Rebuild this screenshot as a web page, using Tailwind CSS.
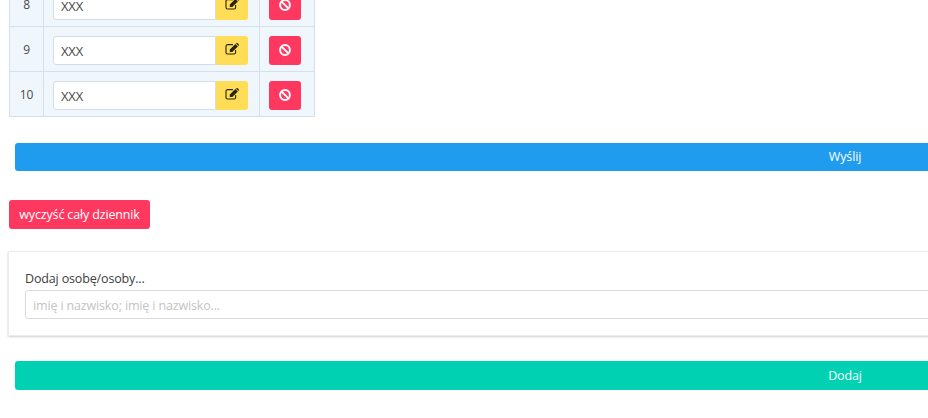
<!DOCTYPE html>
<html lang="pl">
<head>
    <meta charset="UTF-8">
    <meta name="viewport" content="width=device-width, initial-scale=1.0">
    <script src="https://cdn.jsdelivr.net/npm/@tailwindcss/browser@4"></script>
    <title>Dziennik</title>
</head>
<body class="bg-white overflow-hidden h-[418px] font-['Open_Sans',sans-serif] text-[12.5px] tracking-[-0.15px] text-[#4a4a4a]">
    <div class="w-[1700px] -mt-[19px] pl-[9px]">
        <table class="border-collapse bg-[#eff7fd] w-[305px] table-fixed">
            <colgroup><col class="w-[34px]"><col class="w-[216px]"><col class="w-[55px]"></colgroup>
            <tbody>
                <tr class="h-[45px]">
                    <td class="border border-[#d5e1ea] text-center align-middle pt-[2px] text-xs">8</td>
                    <td class="border border-[#d5e1ea] px-[9px] pt-[2px] align-middle">
                        <div class="flex">
                            <input value="XXX" class="w-[163px] h-[29px] bg-white border border-[#d3dde8] rounded-l-[3px] px-[7px] pt-[2px] text-[13px] text-[#4a4a4a]">
                            <button class="w-[32px] h-[29px] bg-[#ffdd57] rounded-r-[3px] flex items-center justify-center pb-[2px]">
                                <svg class="w-[14px] h-[12px]" viewBox="0 0 14 12"><path d="M8 1.6H2.5A1.5 1.5 0 0 0 1 3.1v6.4A1.5 1.5 0 0 0 2.5 11h6.6a1.5 1.5 0 0 0 1.5-1.5V7" fill="none" stroke="#2a2410" stroke-width="1.1"/><path d="M4.8 6.6 10.4 1 12.9 3.4 7.3 9H4.8zM11 .4l.5-.4h1l1.4 1.4v1l-.4.5z" fill="#2a2410"/></svg>
                            </button>
                        </div>
                    </td>
                    <td class="border border-[#d5e1ea] pl-[9px] pt-[2px] align-middle">
                        <button class="w-[32px] h-[29px] bg-[#ff3860] rounded-[3px] flex items-center justify-center pb-[1px]">
                            <svg class="w-[12px] h-[12px]" viewBox="0 0 12 12"><circle cx="6" cy="6" r="4.9" fill="none" stroke="#fff" stroke-width="2"/><path d="M2.6 2.6l6.8 6.8" stroke="#fff" stroke-width="2"/></svg>
                        </button>
                    </td>
                </tr>
                <tr class="h-[45px]">
                    <td class="border border-[#d5e1ea] text-center align-middle pt-[2px] text-xs">9</td>
                    <td class="border border-[#d5e1ea] px-[9px] pt-[2px] align-middle">
                        <div class="flex">
                            <input value="XXX" class="w-[163px] h-[29px] bg-white border border-[#d3dde8] rounded-l-[3px] px-[7px] pt-[2px] text-[13px] text-[#4a4a4a]">
                            <button class="w-[32px] h-[29px] bg-[#ffdd57] rounded-r-[3px] flex items-center justify-center pb-[2px]">
                                <svg class="w-[14px] h-[12px]" viewBox="0 0 14 12"><path d="M8 1.6H2.5A1.5 1.5 0 0 0 1 3.1v6.4A1.5 1.5 0 0 0 2.5 11h6.6a1.5 1.5 0 0 0 1.5-1.5V7" fill="none" stroke="#2a2410" stroke-width="1.1"/><path d="M4.8 6.6 10.4 1 12.9 3.4 7.3 9H4.8zM11 .4l.5-.4h1l1.4 1.4v1l-.4.5z" fill="#2a2410"/></svg>
                            </button>
                        </div>
                    </td>
                    <td class="border border-[#d5e1ea] pl-[9px] pt-[2px] align-middle">
                        <button class="w-[32px] h-[29px] bg-[#ff3860] rounded-[3px] flex items-center justify-center pb-[1px]">
                            <svg class="w-[12px] h-[12px]" viewBox="0 0 12 12"><circle cx="6" cy="6" r="4.9" fill="none" stroke="#fff" stroke-width="2"/><path d="M2.6 2.6l6.8 6.8" stroke="#fff" stroke-width="2"/></svg>
                        </button>
                    </td>
                </tr>
                <tr class="h-[45px]">
                    <td class="border border-[#d5e1ea] text-center align-middle pt-[2px] text-xs">10</td>
                    <td class="border border-[#d5e1ea] px-[9px] pt-[2px] align-middle">
                        <div class="flex">
                            <input value="XXX" class="w-[163px] h-[29px] bg-white border border-[#d3dde8] rounded-l-[3px] px-[7px] pt-[2px] text-[13px] text-[#4a4a4a]">
                            <button class="w-[32px] h-[29px] bg-[#ffdd57] rounded-r-[3px] flex items-center justify-center pb-[2px]">
                                <svg class="w-[14px] h-[12px]" viewBox="0 0 14 12"><path d="M8 1.6H2.5A1.5 1.5 0 0 0 1 3.1v6.4A1.5 1.5 0 0 0 2.5 11h6.6a1.5 1.5 0 0 0 1.5-1.5V7" fill="none" stroke="#2a2410" stroke-width="1.1"/><path d="M4.8 6.6 10.4 1 12.9 3.4 7.3 9H4.8zM11 .4l.5-.4h1l1.4 1.4v1l-.4.5z" fill="#2a2410"/></svg>
                            </button>
                        </div>
                    </td>
                    <td class="border border-[#d5e1ea] pl-[9px] pt-[2px] align-middle">
                        <button class="w-[32px] h-[29px] bg-[#ff3860] rounded-[3px] flex items-center justify-center pb-[1px]">
                            <svg class="w-[12px] h-[12px]" viewBox="0 0 12 12"><circle cx="6" cy="6" r="4.9" fill="none" stroke="#fff" stroke-width="2"/><path d="M2.6 2.6l6.8 6.8" stroke="#fff" stroke-width="2"/></svg>
                        </button>
                    </td>
                </tr>
            </tbody>
        </table>

        <button class="block mt-[26px] ml-[6px] w-[1660px] h-[28px] bg-[#209cee] rounded-[3px] text-white">Wyślij</button>

        <button class="block mt-[29px] h-[29px] w-[141px] pt-[1px] bg-[#ff3860] rounded-[3px] text-white">wyczyść cały dziennik</button>

        <div class="mt-[22px] -ml-[1px] w-[1680px] h-[85px] bg-white border border-[#ececec] shadow-[0_1px_2px_rgba(0,0,0,0.2)] px-[16px] pt-[16px]">
            <label class="block leading-[22px] text-[#404040]">Dodaj osobę/osoby...</label>
            <input placeholder="imię i nazwisko; imię i nazwisko..." class="block w-full h-[29px] border border-[#dbdbdb] rounded-[3px] px-[7px] pt-[2px] placeholder:text-[#c4c4c4]">
        </div>

        <button class="block mt-[25px] ml-[6px] w-[1660px] h-[29px] pt-[2px] bg-[#00d1b2] rounded-[3px] text-white">Dodaj</button>
    </div>
</body>
</html>
